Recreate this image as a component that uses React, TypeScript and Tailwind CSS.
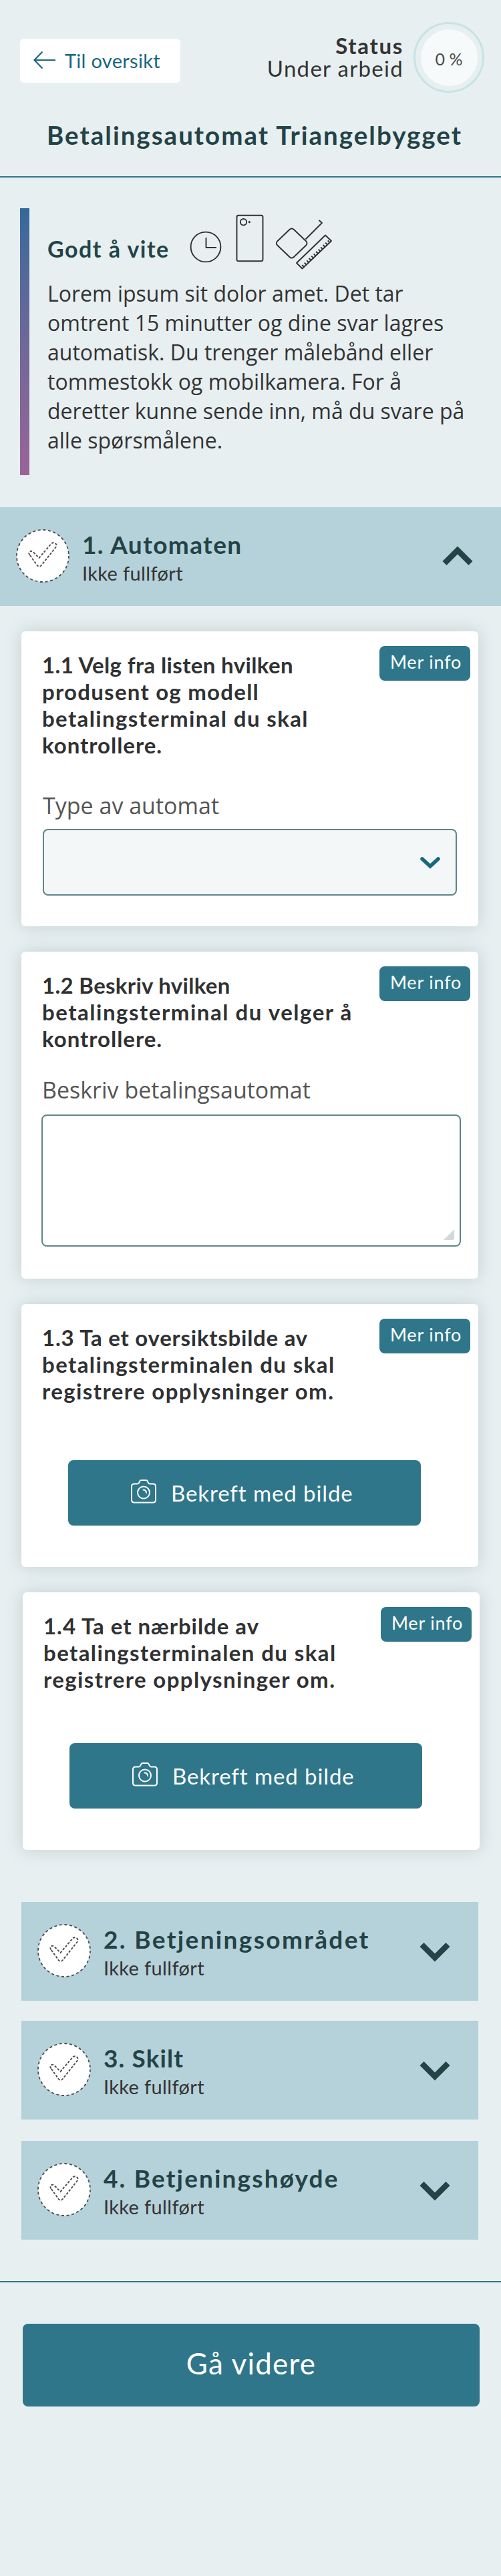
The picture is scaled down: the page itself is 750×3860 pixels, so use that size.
import type { ReactNode } from "react";

type Line = { text: string; tracking: string };

function StatusBadge() {
  return (
    <svg width="80" height="80" viewBox="0 0 80 80" fill="none" className="shrink-0">
      <circle cx="40" cy="40" r="39" fill="#fff" stroke="#4c4c4c" strokeWidth="1.8" strokeDasharray="4 3.66" />
      <path
        d="M20.5 38.5 C17 35 22 30.5 25.5 34 L34.5 43 L52.5 22 C56.5 17.5 63 22.5 59.5 27 L38 54 C36 56.5 33.5 56.5 31.5 54 Z"
        stroke="#4c4c4c"
        strokeWidth="1.9"
        strokeDasharray="3.6 2.2"
      />
    </svg>
  );
}

function Chevron({ up = false }: { up?: boolean }) {
  return (
    <svg width="46" height="30" viewBox="0 0 46 30" fill="none" className="shrink-0">
      <path d={up ? "M3.5 26 L23 6.5 L42.5 26" : "M3.5 4 L23 23.5 L42.5 4"} stroke="#234346" strokeWidth="8.5" />
    </svg>
  );
}

function SectionText({ title }: { title: Line }) {
  return (
    <div className="ml-[19px] flex-1 pt-[33px]">
      <h2 className={"h-[46px] text-[37px] leading-[46px] font-bold whitespace-nowrap text-[#234346] " + title.tracking}>
        {title.text}
      </h2>
      <p className="h-[40px] text-[29px] leading-[40px] tracking-[0.35px] text-[#333]">Ikke fullført</p>
    </div>
  );
}

function CollapsedSection({ title }: { title: Line }) {
  return (
    <section className="flex h-[148px] w-[684px] bg-[#b5d1da] pr-[42px] pl-[24px]">
      <div className="pt-[33px]">
        <StatusBadge />
      </div>
      <SectionText title={title} />
      <div className="pt-[60px]">
        <Chevron />
      </div>
    </section>
  );
}

function Card({ lines, className, children }: { lines: Line[]; className: string; children: ReactNode }) {
  return (
    <section className={"w-[684px] shrink-0 rounded-[6px] bg-white shadow-[0_0_26px_rgba(70,95,100,0.22)] " + className}>
      <div className="flex items-start justify-between pr-[12px] pl-[31px]">
        <h3 className="pt-[30px] text-[33px] leading-[40px] font-bold text-[#303133]">
          {lines.map((l) => (
            <span key={l.text} className={"block whitespace-nowrap " + l.tracking}>
              {l.text}
            </span>
          ))}
        </h3>
        <button className="mt-[22px] flex h-[52px] w-[136px] shrink-0 justify-center rounded-[8px] bg-[#2f768a] pl-[3px] text-[27px] leading-[48px] tracking-[0.8px] whitespace-nowrap text-white">
          Mer info
        </button>
      </div>
      {children}
    </section>
  );
}

function PhotoButton({ className }: { className: string }) {
  return (
    <button className={"ml-[70px] flex h-[98px] w-[528px] items-start rounded-[8px] bg-[#2f768a] pl-[94px] text-white " + className}>
      <svg width="38" height="36" viewBox="0 0 38 36" fill="none" stroke="#fff" strokeWidth="2" strokeLinejoin="round" className="mt-[29px]">
        <path d="M5 6.5 H9.5 C11 6.5 11.5 6 12 5 L13 2.8 C13.5 1.5 14 1 15.500 1 H22.5 C24 1 24.5 1.5 25 2.8 L26 5 C26.5 6 27 6.5 28.5 6.5 H33 C35.5 6.5 37 8 37 10.5 V30.5 C37 33 35.5 34.5 33 34.5 H5 C2.5 34.5 1 33 1 30.5 V10.5 C1 8 2.5 6.5 5 6.5 Z" />
        <circle cx="19" cy="19.5" r="9" />
        <path d="M18.5 15.5 C21 15.5 23 17 23 20" strokeLinecap="round" />
      </svg>
      <span className="ml-[22px] text-[33px] leading-[98px] tracking-[0.9px] whitespace-nowrap">Bekreft med bilde</span>
    </button>
  );
}

const info = [
  "Lorem ipsum sit dolor amet. Det tar",
  "omtrent 15 minutter og dine svar lagres",
  "automatisk. Du trenger målebånd eller",
  "tommestokk og mobilkamera. For å",
  "deretter kunne sende inn, må du svare på",
  "alle spørsmålene.",
];

const listQuestion: Line[] = [
  { text: "1.1 Velg fra listen hvilken", tracking: "tracking-[0.37px]" },
  { text: "produsent og modell", tracking: "tracking-[1.25px]" },
  { text: "betalingsterminal du skal", tracking: "tracking-[1.38px]" },
  { text: "kontrollere.", tracking: "tracking-[0.97px]" },
];

const describeQuestion: Line[] = [
  { text: "1.2 Beskriv hvilken", tracking: "tracking-[0.3px]" },
  { text: "betalingsterminal du velger å", tracking: "tracking-[1.53px]" },
  { text: "kontrollere.", tracking: "tracking-[0.97px]" },
];

const overviewQuestion: Line[] = [
  { text: "1.3 Ta et oversiktsbilde av", tracking: "tracking-[0.75px]" },
  { text: "betalingsterminalen du skal", tracking: "tracking-[1.4px]" },
  { text: "registrere opplysninger om.", tracking: "tracking-[1.4px]" },
];

const closeupQuestion: Line[] = [
  { text: "1.4 Ta et nærbilde av", tracking: "tracking-[0.96px]" },
  { text: "betalingsterminalen du skal", tracking: "tracking-[1.4px]" },
  { text: "registrere opplysninger om.", tracking: "tracking-[1.4px]" },
];

export default function App() {
  return (
    <main className="flex h-[3860px] w-[750px] flex-col bg-[#e7eff1] font-['Lato',sans-serif]">
      <header className="h-[266px] shrink-0 border-b-2 border-[#2f778a]">
        <div className="flex h-[160px] items-start">
          <button className="mt-[58px] ml-[30px] flex h-[66px] w-[240px] items-start rounded-[6px] bg-white pl-[20px] text-[#17677f]">
            <svg width="34" height="28" viewBox="0 0 34 28" fill="none" stroke="#17677f" strokeWidth="2.2" className="mt-[18px]">
              <path d="M1.5 14 H33 M13.5 1.5 L1.5 14 L13.5 26.5" />
            </svg>
            <span className="ml-[13px] text-[29px] leading-[66px] tracking-[0.3px] whitespace-nowrap">Til oversikt</span>
          </button>
          <div className="mt-[51px] flex-1 text-right leading-[34px] text-[#333]">
            <p className="text-[33px] font-bold tracking-[1.7px]">Status</p>
            <p className="text-[33px] tracking-[1.3px]">Under arbeid</p>
          </div>
          <div className="mt-[33px] mr-[25px] ml-[15px] flex h-[106px] w-[106px] items-center justify-center rounded-full border-[3px] border-[#c9e3e4]">
            <div className="flex h-[85px] w-[85px] items-center justify-center rounded-full bg-[#f6fafb] pt-[6px] text-[25px] text-[#4a4a4a]">
              0 %
            </div>
          </div>
        </div>
        <h1 className="pl-[70px] text-[38.5px] leading-[84px] font-bold tracking-[2px] whitespace-nowrap text-[#234346]">
          Betalingsautomat Triangelbygget
        </h1>
      </header>

      <section className="mt-[46px] ml-[30px] flex h-[400px] shrink-0">
        <div className="w-[14px] bg-linear-to-b from-[#32699a] to-[#9a6398]" />
        <div className="ml-[27px]">
          <div className="flex h-[97px] items-start">
            <h2 className="w-[180px] pt-[41px] text-[34px] leading-[40px] font-bold tracking-[1.5px] whitespace-nowrap text-[#234346]">
              Godt å vite
            </h2>
            <svg width="240" height="100" viewBox="0 0 240 100" fill="none" stroke="#303133" strokeWidth="1.9" strokeLinejoin="round" className="-mt-[2px] ml-[19px] shrink-0">
              <circle cx="38" cy="60" r="22.4" />
              <path d="M38.5 46 V61 H54" />
              <rect x="84.500" y="12.7" width="39" height="68.5" rx="2.5" />
              <circle cx="94.5" cy="22.7" r="4.7" />
              <circle cx="103.3" cy="22.7" r="1.2" fill="#303133" strokeWidth="1" />
              <path d="M163.7 33.8 Q166.7 31 169.7 33.8 L188 51.2 Q191 54.5 188 57.8 L169.7 75.2 Q166.7 78 163.7 75.2 L145.4 57.8 Q142.4 54.5 145.4 51.2 Z" />
              <path d="M187.5 48.5 L212 24 L207.5 20" />
              <path d="M217 42.5 L226 51 L182.5 92.5 L174 84 Z" />
              <path d="M185 90 l-2.8 -3 M188.5 86.7 l-2.8 -3 M192 83.3 l-2.8 -3 M195.5 80 l-2.8 -3 M199 76.7 l-2.8 -3 M202.5 73.3 l-2.8 -3 M206 70 l-2.8 -3 M209.5 66.7 l-2.8 -3 M213 63.3 l-2.8 -3 M216.5 60 l-2.8 -3 M220 56.7 l-2.8 -3 M223.5 53.4 l-2.8 -3" />
            </svg>
          </div>
          <p className="pt-[9px] font-['Open_Sans',sans-serif] text-[32px] leading-[44px] text-[#333]">
            {info.map((l) => (
              <span key={l} className="block whitespace-nowrap">
                {l}
              </span>
            ))}
          </p>
        </div>
      </section>

      <section className="mt-[48px] flex h-[148px] shrink-0 bg-[#b5d1da] pr-[42px] pl-[24px]">
        <div className="pt-[33px]">
          <StatusBadge />
        </div>
        <SectionText title={{ text: "1. Automaten", tracking: "tracking-[1.4px]" }} />
        <div className="pt-[58px]">
          <Chevron up />
        </div>
      </section>

      <div className="mt-[38px] ml-[32px] flex shrink-0 flex-col gap-[38px]">
        <Card className="h-[442px]" lines={listQuestion}>
          <p className="mt-[51px] ml-[32px] font-['Open_Sans',sans-serif] text-[34px] leading-[40px] text-[#555]">Type av automat</p>
          <div className="mt-[15px] ml-[32px] flex h-[100px] w-[620px] items-center justify-end rounded-[8px] border-2 border-[#5f8587] bg-[#f3f7f8] pr-[22px]">
            <svg width="32" height="20" viewBox="0 0 32 20" fill="none" stroke="#17677f" strokeWidth="5.5" strokeLinecap="round" className="mt-[2px]">
              <path d="M4 4 L16 15 L28 4" />
            </svg>
          </div>
        </Card>
        <Card className="h-[490px]" lines={describeQuestion}>
          <p className="mt-[37px] ml-[31px] font-['Open_Sans',sans-serif] text-[34px] leading-[40px] text-[#555]">Beskriv betalingsautomat</p>
          <div className="mt-[17px] ml-[30px] flex h-[198px] w-[628px] items-end justify-end rounded-[8px] border-2 border-[#5f8587] bg-white pr-[8px] pb-[8px]">
            <svg width="16" height="16" viewBox="0 0 16 16">
              <path d="M16 0 V13 Q16 16 13 16 H0 Z" fill="#d3d9da" />
            </svg>
          </div>
        </Card>
        <Card className="h-[394px]" lines={overviewQuestion}>
          <PhotoButton className="mt-[84px]" />
        </Card>
        <Card className="ml-[2px] h-[386px]" lines={closeupQuestion}>
          <PhotoButton className="mt-[76px]" />
        </Card>
      </div>

      <div className="mt-[78px] ml-[32px] flex shrink-0 flex-col">
        <CollapsedSection title={{ text: "2. Betjeningsområdet", tracking: "tracking-[2.35px]" }} />
        <div className="mt-[30px]">
          <CollapsedSection title={{ text: "3. Skilt", tracking: "tracking-[1.1px]" }} />
        </div>
        <div className="mt-[32px]">
          <CollapsedSection title={{ text: "4. Betjeningshøyde", tracking: "tracking-[2.15px]" }} />
        </div>
      </div>

      <footer className="mt-[62px] shrink-0 border-t-2 border-[#2f778a] pt-[62px] pl-[34px]">
        <button className="flex h-[124px] w-[684px] justify-center rounded-[8px] bg-[#2f768a] text-[44px] leading-[118px] tracking-[1.2px] text-white">
          Gå videre
        </button>
      </footer>
    </main>
  );
}
